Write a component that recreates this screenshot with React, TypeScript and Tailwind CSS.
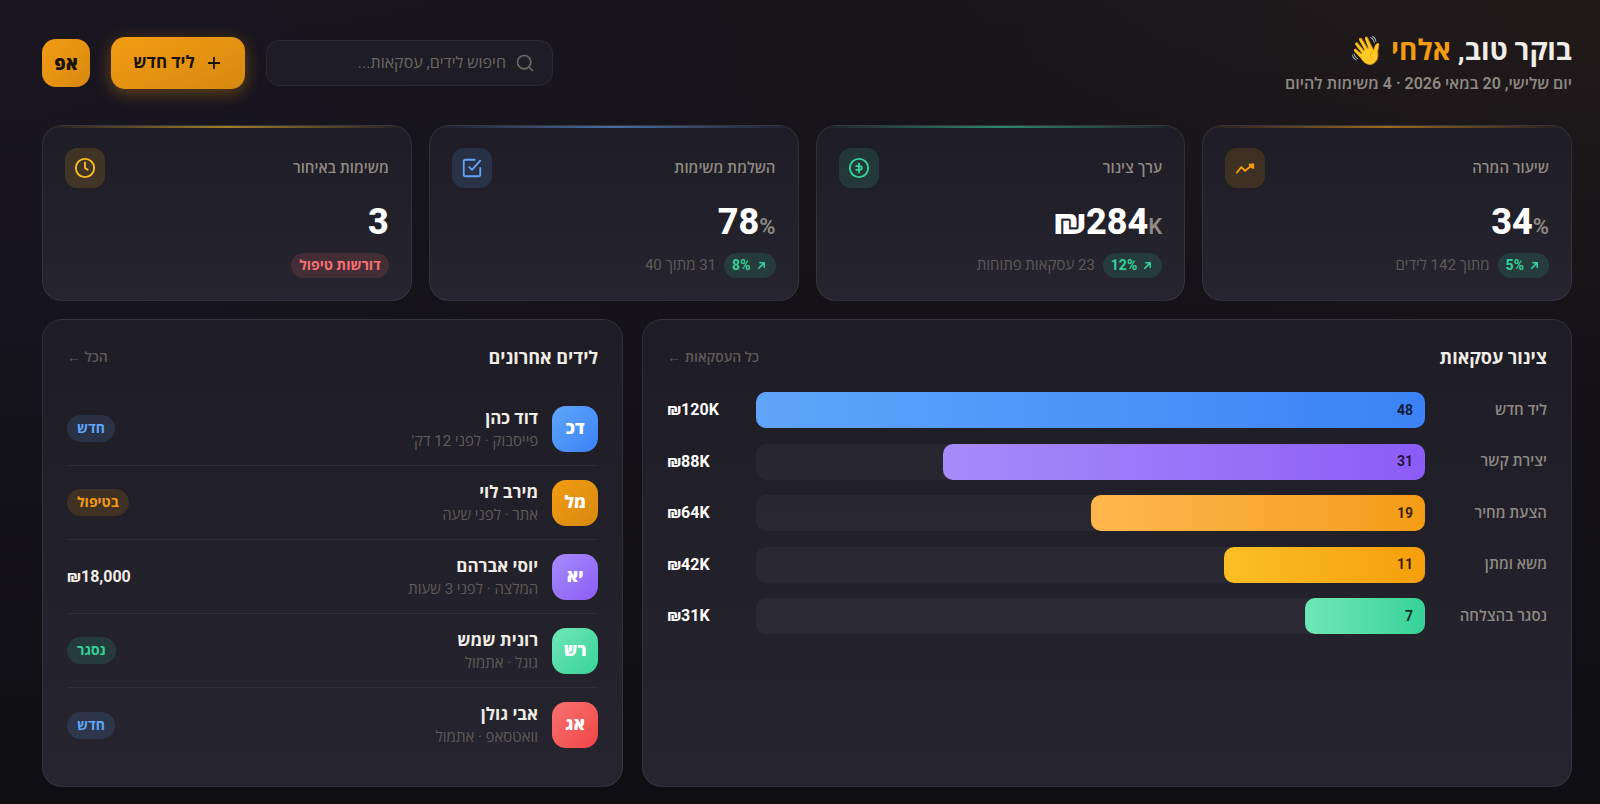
import type { ReactNode } from 'react'
import clsx from 'clsx'

type Stat = {
  label: string
  value: string
  unit?: string
  trend?: string
  note?: string
  alert?: string
  line: string
  box: string
  icon: ReactNode
}

const STATS: Stat[] = [
  {
    label: 'שיעור המרה',
    value: '34',
    unit: '%',
    trend: '5%',
    note: 'מתוך 142 לידים',
    line: 'via-[#f39c12]',
    box: 'bg-[#f39c12]/15 text-[#f39c12]',
    icon: <path d="m3 17 5-6 4 4 9-7v4l-4-2 4-2h-4" />,
  },
  {
    label: 'ערך צינור',
    value: '₪284',
    unit: 'K',
    trend: '12%',
    note: '23 עסקאות פתוחות',
    line: 'via-[#34d399]',
    box: 'bg-[#34d399]/15 text-[#34d399]',
    icon: (
      <>
        <circle cx="12" cy="12" r="10" />
        <path d="M12 7v10M9 10h4a2 2 0 0 1 0 4H9" />
      </>
    ),
  },
  {
    label: 'השלמת משימות',
    value: '78',
    unit: '%',
    trend: '8%',
    note: '31 מתוך 40',
    line: 'via-[#60a5fa]',
    box: 'bg-[#60a5fa]/15 text-[#60a5fa]',
    icon: (
      <>
        <path d="m9 11 3 3 9-10" />
        <path d="M21 12v7a2 2 0 0 1-2 2H5a2 2 0 0 1-2-2V5a2 2 0 0 1 2-2h10" />
      </>
    ),
  },
  {
    label: 'משימות באיחור',
    value: '3',
    alert: 'דורשות טיפול',
    line: 'via-[#fbbf24]',
    box: 'bg-[#fbbf24]/15 text-[#fbbf24]',
    icon: (
      <>
        <circle cx="12" cy="12" r="10" />
        <path d="M12 6v6l3 2" />
      </>
    ),
  },
]

const STAGES = [
  { label: 'ליד חדש', count: 48, amount: '₪120K', width: 100, bar: 'from-[#3b82f6] to-[#60a5fa]' },
  { label: 'יצירת קשר', count: 31, amount: '₪88K', width: 72, bar: 'from-[#8b5cf6] to-[#a78bfa]' },
  { label: 'הצעת מחיר', count: 19, amount: '₪64K', width: 50, bar: 'from-[#f39c12] to-[#ffb74d]' },
  { label: 'משא ומתן', count: 11, amount: '₪42K', width: 30, bar: 'from-[#f59e0b] to-[#fbbf24]' },
  { label: 'נסגר בהצלחה', count: 7, amount: '₪31K', width: 18, bar: 'from-[#34d399] to-[#6ee7b7]' },
]

const BLUE = 'bg-[#60a5fa]/15 text-[#60a5fa]'

const LEADS = [
  { initials: 'דכ', name: 'דוד כהן', meta: "פייסבוק · לפני 12 דק'", tag: 'חדש', tone: BLUE, avatar: 'from-[#60a5fa] to-[#3b82f6]' },
  { initials: 'מל', name: 'מירב לוי', meta: 'אתר · לפני שעה', tag: 'בטיפול', tone: 'bg-[#f39c12]/15 text-[#f39c12]', avatar: 'from-[#f39c12] to-[#d68910]' },
  { initials: 'יא', name: 'יוסי אברהם', meta: 'המלצה · לפני 3 שעות', amount: '₪18,000', avatar: 'from-[#a78bfa] to-[#8b5cf6]' },
  { initials: 'רש', name: 'רונית שמש', meta: 'גוגל · אתמול', tag: 'נסגר', tone: 'bg-[#34d399]/15 text-[#34d399]', avatar: 'from-[#6ee7b7] to-[#34d399]' },
  { initials: 'אג', name: 'אבי גולן', meta: 'וואטסאפ · אתמול', tag: 'חדש', tone: BLUE, avatar: 'from-[#f87171] to-[#ef4444]' },
]

const SURFACE = 'border border-white/8 bg-linear-to-b from-[#1e1c24] to-[#26242e]'

function Icon({ size, width = 2, children }: { size: number; width?: number; children: ReactNode }) {
  return (
    <svg
      width={size}
      height={size}
      viewBox="0 0 24 24"
      fill="none"
      stroke="currentColor"
      strokeWidth={width}
      strokeLinecap="round"
      strokeLinejoin="round"
      aria-hidden="true"
      className="shrink-0"
    >
      {children}
    </svg>
  )
}

function Header() {
  return (
    <header className="flex items-center justify-between">
      <div>
        <h1 className="text-[28px] font-bold leading-[42px] text-[#f0ece6]">
          בוקר טוב, <span className="text-[#f39c12]">אלחי</span> 👋
        </h1>
        <p className="text-[16px] font-semibold leading-6 text-[#8f8a83]">
          יום שלישי, 20 במאי 2026 · 4 משימות להיום
        </p>
      </div>
      <div className="flex items-center gap-[21px]">
        <label className="flex h-[46px] w-[287px] items-center gap-[9px] rounded-[14px] border border-white/6 bg-[#1e1c24] px-[17px] text-[#6b6761]">
          <Icon size={20}>
            <circle cx="11" cy="11" r="8" />
            <path d="m21 21-4-4" />
          </Icon>
          <input
            type="search"
            aria-label="חיפוש"
            placeholder="חיפוש לידים, עסקאות..."
            className="min-w-0 flex-1 bg-transparent text-[16px] text-[#f0ece6] outline-none placeholder:text-[#6b6761]"
          />
        </label>
        <button
          type="button"
          className="flex h-[52px] w-[134px] items-center justify-center gap-[10px] rounded-[14px] bg-linear-to-br from-[#f39c12] to-[#d68910] text-[17px] font-bold text-[#1a1208] shadow-[0_4px_16px_rgba(243,156,18,0.35)]"
        >
          <Icon size={18} width={2.5}>
            <path d="M12 5v14M5 12h14" />
          </Icon>
          ליד חדש
        </button>
        <button
          type="button"
          className="size-12 rounded-[14px] bg-linear-to-br from-[#f39c12] to-[#d68910] text-[18px] font-extrabold text-[#1a1208]"
        >
          אפ
        </button>
      </div>
    </header>
  )
}

function StatCard({ stat }: { stat: Stat }) {
  return (
    <article className={clsx('relative h-44 overflow-hidden rounded-[20px] px-[22px] pt-[22px]', SURFACE)}>
      <div className={clsx('absolute inset-x-0 top-0 h-[2px] bg-linear-to-r from-transparent to-transparent opacity-60', stat.line)} />
      <div className="flex items-center justify-between">
        <h2 className="text-[15px] font-semibold text-[#8f8a83]">{stat.label}</h2>
        <span className={clsx('flex size-10 items-center justify-center rounded-[12px]', stat.box)}>
          <Icon size={22}>{stat.icon}</Icon>
        </span>
      </div>
      <p className="mt-[14px] h-10 text-[36px] font-extrabold leading-10 text-white">
        {stat.value}
        {stat.unit && <span className="text-[22px] font-semibold text-[#8f8a83]">{stat.unit}</span>}
      </p>
      <div className="mt-[11px] flex items-center gap-2 text-[14px]">
        {stat.trend && (
          <span className="flex h-[25px] items-center gap-1 rounded-full bg-[#34d399]/15 px-2 font-bold text-[#34d399]">
            <Icon size={13} width={3}>
              <path d="M7 17 17 7M9 7h8v8" />
            </Icon>
            {stat.trend}
          </span>
        )}
        {stat.alert && (
          <span className="flex h-[25px] items-center rounded-full bg-[#f87171]/15 px-2 font-bold text-[#f87171]">
            {stat.alert}
          </span>
        )}
        {stat.note && <span className="text-[15px] text-[#5f5b57]">{stat.note}</span>}
      </div>
    </article>
  )
}

function Panel({ title, link, children }: { title: string; link: string; children: ReactNode }) {
  return (
    <section className={clsx('rounded-[20px] p-6', SURFACE)}>
      <div className="mb-[21px] flex h-[27px] items-center justify-between">
        <h2 className="text-[18px] font-bold text-[#f0ece6]">{title}</h2>
        <a href="#" className="text-[14px] font-semibold text-[#5f5b57]">
          {link} ←
        </a>
      </div>
      {children}
    </section>
  )
}

export default function App() {
  return (
    <div
      dir="rtl"
      className="min-h-screen bg-[#0f0e13] bg-[radial-gradient(ellipse_800px_400px_at_100%_0%,rgba(243,156,18,0.04),transparent),radial-gradient(ellipse_800px_600px_at_0%_20%,rgba(100,80,220,0.03),transparent),linear-gradient(#18151b,#0f0e12)] pr-7 pl-[42px] pt-[30px] pb-[17px] font-[Roboto,'Open_Sans','Noto_Sans',sans-serif]"
    >
      <Header />
      <main className="mt-[29px] flex flex-col gap-[18px]">
        <div className="grid grid-cols-4 gap-[17px]">
          {STATS.map((s) => (
            <StatCard key={s.label} stat={s} />
          ))}
        </div>
        <div className="grid grid-cols-[1.6fr_1fr] gap-[19px]">
          <Panel title="צינור עסקאות" link="כל העסקאות">
            <div className="flex h-[242px] flex-col justify-between">
              {STAGES.map((s) => (
                <div key={s.label} className="flex h-9 items-center gap-[14px]">
                  <span className="w-[108px] text-[15px] font-semibold text-[#8f8a83]">{s.label}</span>
                  <div className="flex-1 rounded-[10px] bg-white/4">
                    <div
                      className={clsx('flex h-9 items-center rounded-[10px] bg-linear-to-l px-3 text-[14px] font-bold text-black/80', s.bar)}
                      style={{ width: `${s.width}%` }}
                    >
                      {s.count}
                    </div>
                  </div>
                  <span className="w-[75px] text-left text-[16px] font-bold text-white">{s.amount}</span>
                </div>
              ))}
            </div>
          </Panel>
          <Panel title="לידים אחרונים" link="הכל">
            <ul>
              {LEADS.map((l) => (
                <li key={l.name} className="flex h-[74px] items-center gap-[14px] border-b border-white/6 last:border-b-0">
                  <span className={clsx('flex size-[46px] items-center justify-center rounded-[14px] bg-linear-to-br text-[17px] font-extrabold text-white', l.avatar)}>
                    {l.initials}
                  </span>
                  <div className="flex-1">
                    <div className="text-[17px] font-bold leading-6 text-[#f0ece6]">{l.name}</div>
                    <div className="text-[15px] leading-[22px] text-[#5f5b57]">{l.meta}</div>
                  </div>
                  {l.tag ? (
                    <span className={clsx('flex h-[27px] items-center rounded-full px-[10px] text-[14px] font-bold', l.tone)}>{l.tag}</span>
                  ) : (
                    <span className="text-[16px] font-bold text-[#f0ece6]">{l.amount}</span>
                  )}
                </li>
              ))}
            </ul>
          </Panel>
        </div>
      </main>
    </div>
  )
}
